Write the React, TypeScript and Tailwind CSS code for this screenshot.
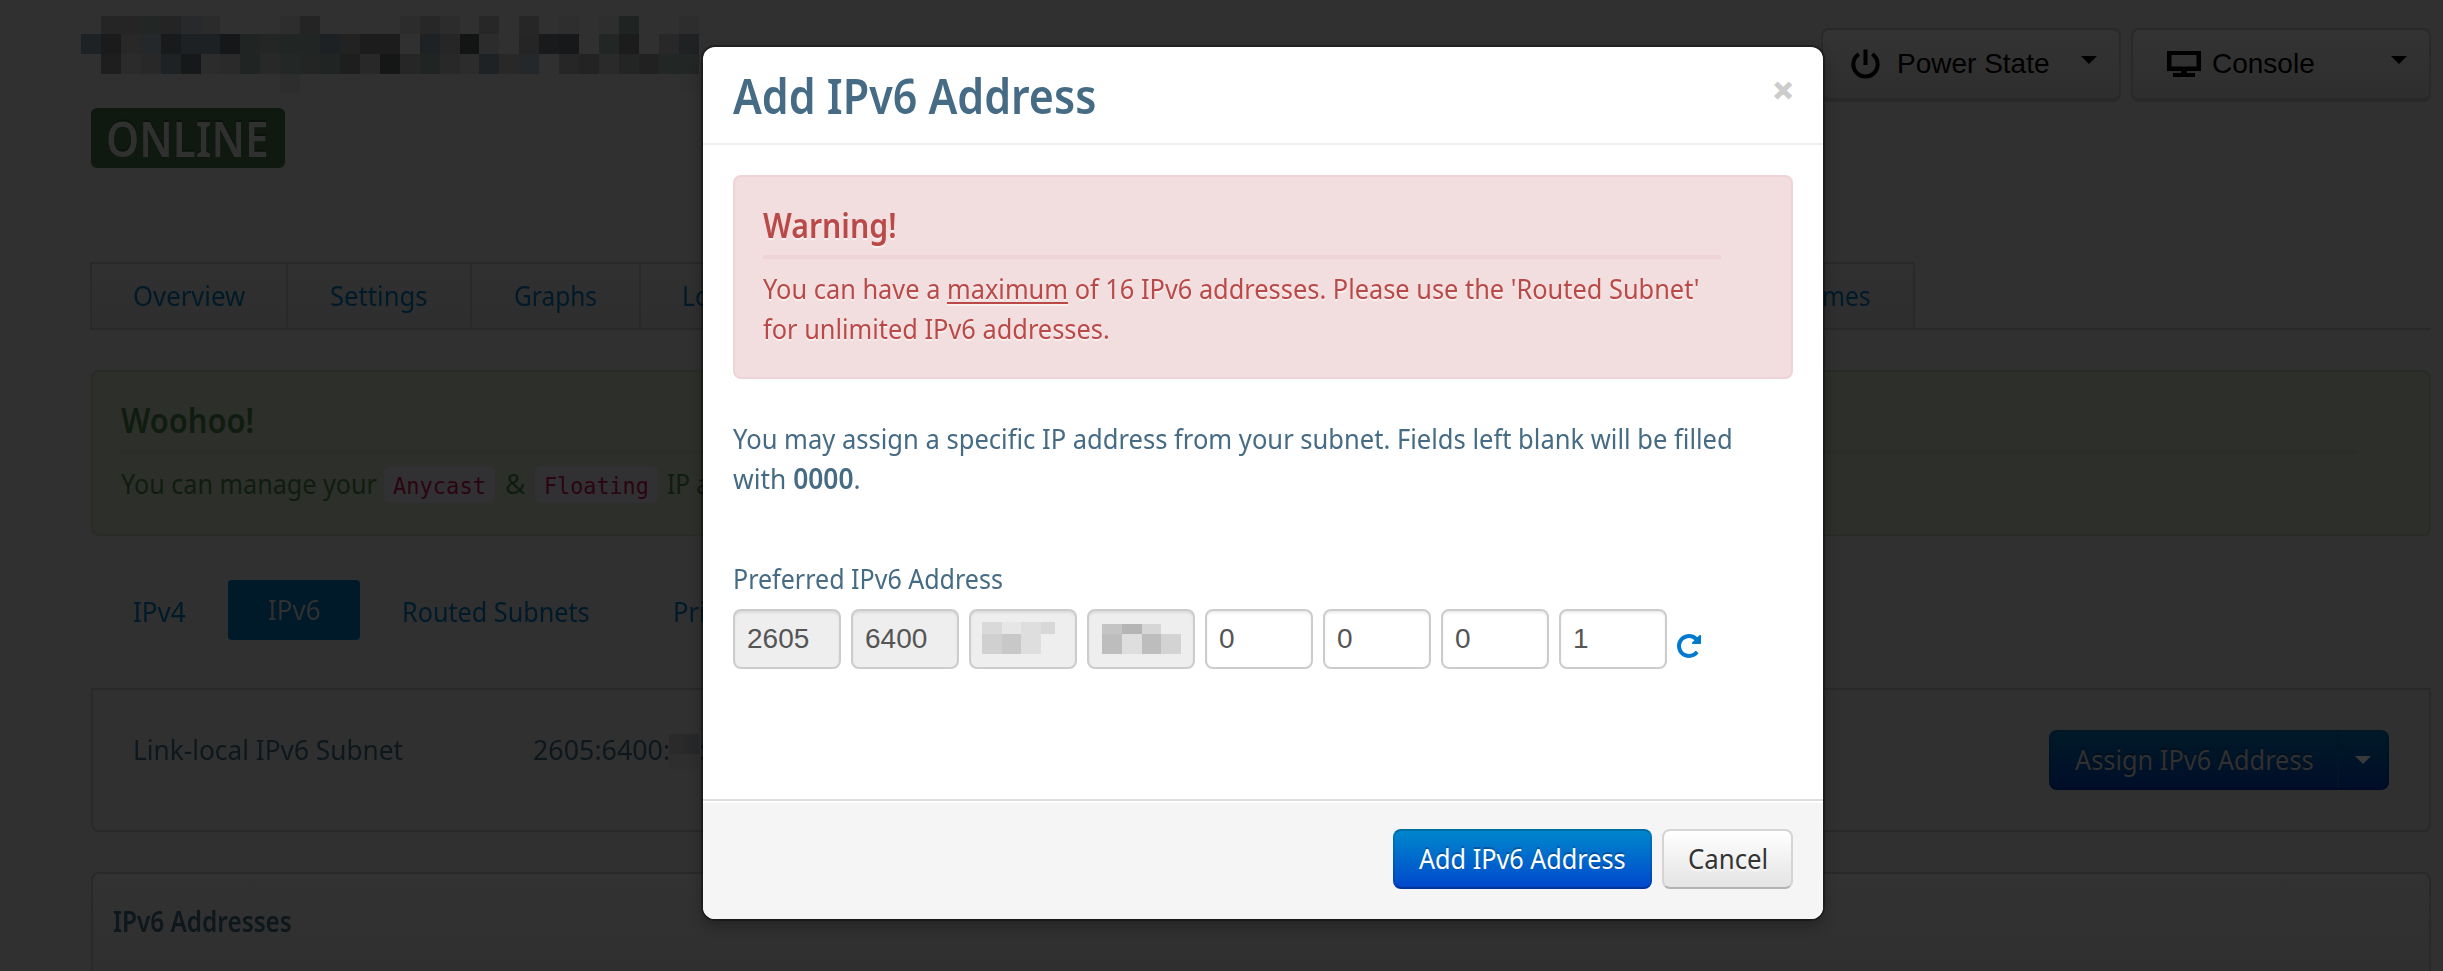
import { useLayoutEffect, useRef, useState, type ReactNode } from "react";

/* Text run condensed horizontally to an exact advance width. */
function Fit({ w, dy = 0, className = "", children }: { w: number; dy?: number; className?: string; children: ReactNode }) {
  const ref = useRef<HTMLSpanElement>(null);
  const [scale, setScale] = useState(0.9);
  useLayoutEffect(() => {
    if (ref.current) setScale(w / ref.current.offsetWidth);
  }, [w]);
  return (
    <span className={`inline-block whitespace-nowrap ${className}`} style={{ width: w }}>
      <span ref={ref} className="inline-block origin-left" style={{ transform: `translateY(${dy}px) scaleX(${scale})` }}>
        {children}
      </span>
    </span>
  );
}

function Mosaic({ rows, heights, cell }: { rows: string[][]; heights: number[]; cell: number }) {
  return (
    <span className="flex flex-col">
      {rows.map((row, r) => (
        <span key={r} className="flex" style={{ height: heights[r] }}>
          {row.map((c, i) => (
            <span key={i} className="block h-full shrink-0" style={{ width: cell, backgroundColor: c ? `#${c}` : undefined }} />
          ))}
        </span>
      ))}
    </span>
  );
}

const HOSTNAME = [
  ",242524,242524,222625,242424,27292a,2b2b2b,,,,2d2d2d,242424,,,,,2c2c2c,272727,2c2c2c,,272727,,262626,,2e2e2e,,2e2e2e,1f2321,,,2d2d2d",
  "1f2225,1b1b1b,282828,25282a,191a1b,1e2123,1e2123,161718,202422,232625,212523,212523,1e2123,222222,1c1c1c,1c1c1c,,1f2225,262626,131514,2c2c2c,,252525,191a1c,17181a,,222625,1c1c1c,,282828,1f2123",
  ",1e1e1e,2b2b2b,282828,1f2225,171819,2c2c2c,2a2a2a,202422,282828,232726,232525,202422,1e1e1e,282828,151716,262626,202422,282828,2c2c2c,1f2225,282828,25282a,,262626,232323,2a2a2a,232525,212121,222625,222625",
  ",,,,,,,,,,2d2d2d,,,,,,,,,,,,,,,,,,,,2f2f2f",
].map((r) => r.split(","));

function Caret({ className = "" }: { className?: string }) {
  return (
    <svg viewBox="0 0 16 8" className={`h-2 w-4 ${className}`} fill="currentColor">
      <path d="M0 0h16L8 8z" />
    </svg>
  );
}

const topButton =
  "flex h-[74px] w-[300px] rounded-lg border-2 border-b-4 border-[#292929] bg-gradient-to-b from-[#333] to-[#2e2e2e] font-['Liberation_Sans',sans-serif] text-[28px] leading-[44px] text-black";

function Page() {
  return (
    <div className="h-full pl-[91px] pr-3 text-[28px] leading-10">
      <header className="flex h-[262px] justify-between">
        <div className="pt-4">
          <div className="-ml-[10px] h-[92px]">
            <Mosaic rows={HOSTNAME} heights={[18, 20, 20, 19]} cell={19.93} />
          </div>
          <div className="h-[60px] w-[194px] rounded-md bg-[#0f190f] pl-[15px] text-[49px] font-semibold leading-[60px] text-[#303030] [text-shadow:0_-2px_0_rgba(0,0,0,0.25)]">
            <Fit w={163}>ONLINE</Fit>
          </div>
        </div>
        <div className="flex gap-[10px] pt-7">
          <button className={topButton}>
            <svg viewBox="0 0 29 31" className="ml-7 mt-[19px] h-[31px] w-[29px]" fill="none" stroke="currentColor" strokeWidth="4">
              <path d="M14.500 0.500V16M7.800 5.200A12.200 12.200 0 1 0 21.200 5.200" />
            </svg>
            <span className="ml-[17px] mt-3">Power State</span>
            <Caret className="ml-[31px] mt-[26px]" />
          </button>
          <button className={topButton}>
            <svg viewBox="0 0 34 26" className="ml-[34px] mt-[21px] h-[26px] w-[34px]" fill="currentColor">
              <path fillRule="evenodd" d="M0 0h34v20H20v2h8v4H6v-4h8v-2H0zM4.500 4v11.500h25V4z" />
            </svg>
            <span className="ml-[11px] mt-3">Console</span>
            <Caret className="ml-[76px] mt-[26px]" />
          </button>
        </div>
      </header>

      <nav className="-ml-px flex h-[68px] border-b-2 border-[#292929] text-[#001a2a]">
        <div className="flex w-[1825px] border-2 border-b-0 border-[#292929] bg-gradient-to-b from-[#303030] to-[#2e2e2e] pt-[11px] [&>span]:-mt-[11px] [&>span]:pt-[11px]">
          <span className="w-[196px] border-r-2 border-[#292929] pl-[41px]"><Fit w={112}>Overview</Fit></span>
          <span className="w-[184px] border-r-2 border-[#292929] pl-[42px]"><Fit w={98}>Settings</Fit></span>
          <span className="w-[169px] border-r-2 border-[#292929] pl-[42px]"><Fit w={83}>Graphs</Fit></span>
          <span className="grow pl-[41px]"><Fit w={55}>Logs</Fit></span>
          <span className="pr-[42px]"><Fit w={132}>Hostnames</Fit></span>
        </div>
      </nav>

      <section className="mt-10 h-[166px] rounded-lg border-2 border-[#292c26] bg-[#2d2f2a] pl-7 pr-[71px] pt-[27px] text-[#101c10]">
        <h4 className="text-[35px] font-semibold leading-10"><Fit w={133} dy={1}>Woohoo!</Fit></h4>
        <div className="mt-[11px] h-1 bg-[#2b2d28]" />
        <div className="mt-2 flex">
          <Fit w={256} dy={1}>You can manage your</Fit>
          <code className="ml-[7px] mt-1 h-[37px] rounded-md bg-[#313133] px-[9px] font-['DejaVu_Sans_Mono',monospace] text-[23px] leading-[37px] text-[#2b0410]"><Fit w={93} dy={2}>Anycast</Fit></code>
          <Fit w={21} dy={1} className="ml-[10px]">&amp;</Fit>
          <code className="ml-[9px] mt-1 h-[37px] rounded-md bg-[#313133] px-[9px] font-['DejaVu_Sans_Mono',monospace] text-[23px] leading-[37px] text-[#2b0410]"><Fit w={105} dy={2}>Floating</Fit></code>
          <Fit w={145} dy={1} className="ml-[9px]">IP addresses</Fit>
        </div>
      </section>

      <nav className="mt-[44px] flex h-[60px] leading-[62px] text-[#001a2a]">
        <Fit w={53} className="ml-[42px]">IPv4</Fit>
        <span className="ml-[42px] h-[60px] w-[132px] rounded bg-[#001a29] pl-10 leading-[58px] text-[#303030]"><Fit w={53}>IPv6</Fit></span>
        <Fit w={188} className="ml-[42px]">Routed Subnets</Fit>
        <Fit w={84} className="ml-[83px]">Private</Fit>
      </nav>

      <section className="mt-12 flex h-[144px] items-start rounded-b-lg border-2 border-[#292929] pl-10 text-[#0e171c]">
        <Fit w={270} className="mt-[39px]">Link-local IPv6 Subnet</Fit>
        <Fit w={137} className="ml-[130px] mt-[39px]">2605:6400:</Fit>
        <span className="-ml-px mt-11"><Mosaic rows={[["2a2a2a", "27282a"], ["2e2e2e", "2e2e2e"]]} heights={[20, 15]} cell={15} /></span>
        <span className="mt-[39px]">:</span>
        <div className="ml-auto mr-10 mt-10 flex h-[60px] w-[340px] rounded-lg border-2 border-black/10 bg-gradient-to-b from-[#001a28] to-[#000d28] bg-origin-border text-[#303030] [text-shadow:0_-2px_0_rgba(0,0,0,0.25)]">
          <span className="w-[288px] border-r-2 border-[#001626] pl-6 leading-[56px]"><Fit w={239} dy={-1}>Assign IPv6 Address</Fit></span>
          <Caret className="ml-4 mt-6 text-[#3a3a3a]" />
        </div>
      </section>

      <section className="mt-10 h-[140px] rounded-t-lg border-2 border-[#292929] bg-gradient-to-b from-[#323232] to-[#2e2e2e] pl-5 pt-[27px] font-semibold text-[#0e171c]">
        <Fit w={179}>IPv6 Addresses</Fit>
      </section>
    </div>
  );
}

const field = "h-[60px] w-[108px] rounded-lg border-2 border-[#ccc] shadow-[inset_0_2px_2px_rgba(0,0,0,0.075)]";
const fieldText = "pl-3 font-['Liberation_Sans',sans-serif] text-[28px] leading-[55px] text-[#555]";

function Modal() {
  return (
    <div
      role="dialog"
      className="absolute left-[703px] top-[47px] h-[872px] w-[1120px] rounded-xl bg-white text-[28px] leading-10 text-[#456b85] shadow-[0_0_0_2px_rgba(0,0,0,0.3),0_6px_14px_rgba(0,0,0,0.3)]"
    >
      <div className="flex h-[98px] justify-between border-b-2 border-[#eee] pl-[30px] pr-[30px] pt-[18px]">
        <h3 className="text-[49px] font-semibold leading-[60px]"><Fit w={363}>Add IPv6 Address</Fit></h3>
        <button className="mt-[5px] h-10 w-[20px] text-center font-['Liberation_Sans',sans-serif] text-[32px] font-bold leading-[41px] text-[#ccc] [-webkit-text-stroke:1.5px_#ccc]">×</button>
      </div>

      <div className="h-[654px] px-[30px] pt-[30px]">
        <div className="h-[204px] rounded-lg border-2 border-[#eed3d7] bg-[#f2dede] pl-7 pr-[70px] pt-7 text-[#b94a48] [text-shadow:0_2px_0_rgba(255,255,255,0.5)]">
          <h4 className="text-[35px] font-semibold leading-10"><Fit w={134}>Warning!</Fit></h4>
          <div className="mt-[10px] h-1 bg-[#eed3d7]" />
          <p className="mt-[9px]">
            <Fit w={937}>
              You can have a <span className="underline decoration-2 underline-offset-[3px]">maximum</span> of 16 IPv6 addresses. Please use the 'Routed Subnet'
            </Fit>
            <br />
            <Fit w={347}>for unlimited IPv6 addresses.</Fit>
          </p>
        </div>

        <p className="mt-[39px]">
          <Fit w={1000}>You may assign a specific IP address from your subnet. Fields left blank will be filled</Fit>
          <br />
          <Fit w={128}>with <b className="font-semibold">0000</b>.</Fit>
        </p>

        <div className="mt-[60px]"><Fit w={270}>Preferred IPv6 Address</Fit></div>
        <div className="mt-[11px] flex gap-[10px]">
          <div className={`${field} ${fieldText} bg-[#eee]`}>2605</div>
          <div className={`${field} ${fieldText} bg-[#eee]`}>6400</div>
          <div className={`${field} bg-[#eee] pl-[11px] pt-[11px]`}>
            <span className="block w-[73px] overflow-hidden">
              <Mosaic rows={[["d9d9d9", "e6e6e6", "dedede", "d8d8d8"], ["d0d0d0", "c8c8c8", "dedede"]]} heights={[12, 20]} cell={19.6} />
            </span>
          </div>
          <div className={`${field} bg-[#eee] pl-[13px] pt-[13px]`}>
            <Mosaic rows={[["c4c4c4", "b5b5b5", "d6d6d6"], ["bdbdbd", "dedede", "bdbdbd", "d3d3d3"]]} heights={[10, 20]} cell={19.8} />
          </div>
          <div className={`${field} ${fieldText} bg-white`}>0</div>
          <div className={`${field} ${fieldText} bg-white`}>0</div>
          <div className={`${field} ${fieldText} bg-white`}>0</div>
          <div className={`${field} ${fieldText} bg-white`}>1</div>
          <svg viewBox="0 0 1536 1536" className="mt-[25px] h-6 w-6" fill="#007ad0">
            <path d="M1536 128v448q0 26-19 45t-45 19h-448q-42 0-59-40-17-39 14-69l138-138q-148-137-349-137-104 0-198.500 40.500t-163.500 109.500-109.500 163.500-40.500 198.500 40.500 198.500 109.500 163.500 163.500 109.500 198.500 40.500q119 0 225-52t179-147q7-10 23-12 15 0 25 9l137 138q9 8 9.500 20.500t-7.500 22.500q-109 132-264 204.500t-327 72.500q-156 0-298-61t-245-164-164-245-61-298 61-298 164-245 245-164 298-61q147 0 284.500 55.500t244.500 156.500l130-129q29-31 70-14 39 17 39 59z" />
          </svg>
        </div>
      </div>

      <div className="flex h-[120px] justify-end gap-[10px] rounded-b-xl border-t-2 border-[#ddd] bg-[#f5f5f5] pr-[30px] pt-7 shadow-[inset_0_2px_0_#fff]">
        <button className="h-[60px] w-[259px] rounded-lg border-2 border-x-black/10 border-b-black/25 border-t-black/20 bg-gradient-to-b from-[#08c] to-[#04c] bg-origin-border pl-6 text-left leading-[54px] text-white [text-shadow:0_-2px_0_rgba(0,0,0,0.25)]">
          <Fit w={207} dy={-1}>Add IPv6 Address</Fit>
        </button>
        <button className="h-[60px] w-[131px] rounded-lg border-2 border-[#d4d4d4] border-b-[#b3b3b3] bg-gradient-to-b from-white to-[#e4e4e4] pl-6 text-left leading-[54px] text-[#333] [text-shadow:0_2px_2px_rgba(255,255,255,0.75)]">
          <Fit w={80} dy={-1}>Cancel</Fit>
        </button>
      </div>
    </div>
  );
}

export default function App() {
  return (
    <div className="relative h-[971px] w-[2443px] overflow-hidden bg-[#303030] font-['Noto_Sans',sans-serif]">
      <Page />
      <Modal />
    </div>
  );
}
